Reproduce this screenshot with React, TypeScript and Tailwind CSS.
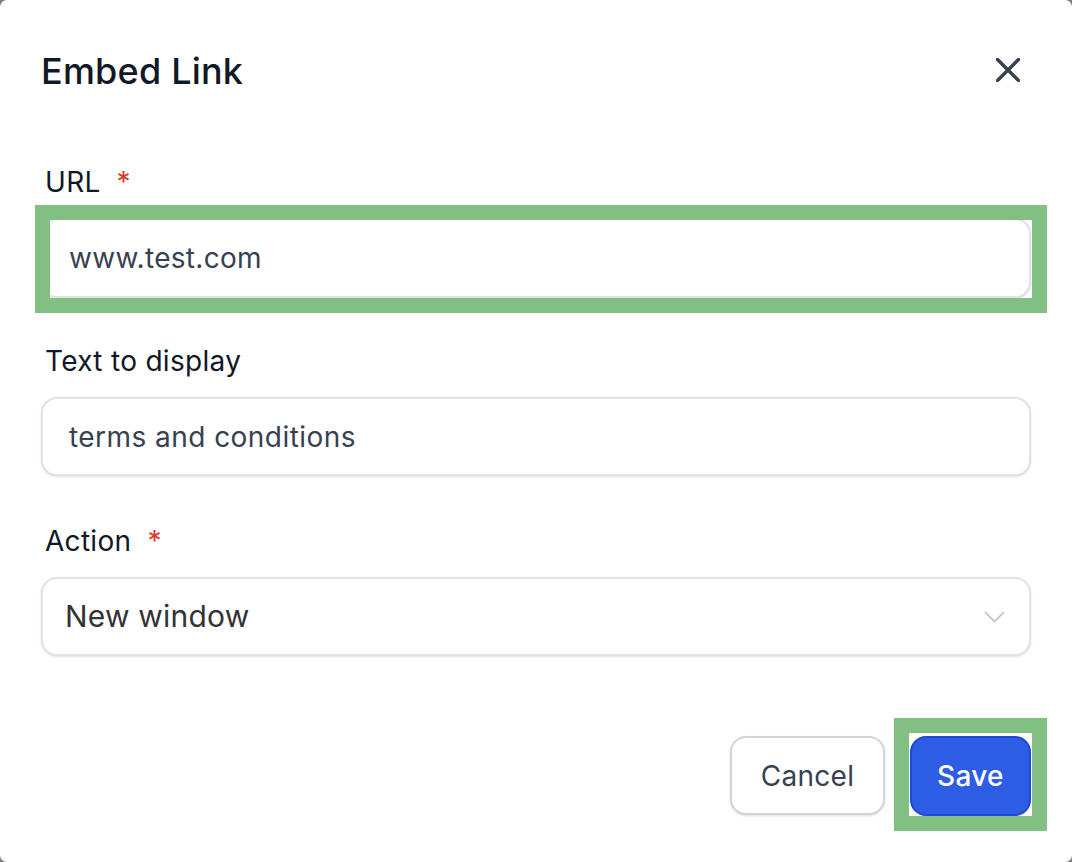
import React from "react";

const font = { fontFamily: "Inter, 'Noto Sans', sans-serif" };

function Label({ text, required }: { text: string; required?: boolean }) {
  return (
    <div className="flex items-start pl-[4px] text-[28px] leading-[40px] text-[#111827] tracking-[0.3px]">
      <span>{text}</span>
      {required && <span className="ml-[16px] text-[#d4402b]">*</span>}
    </div>
  );
}

export default function App() {
  return (
    <div className="w-[1072px] h-[862px] bg-[#7d7d7d]" style={font}>
      <div className="w-full h-full bg-white rounded-[7px] flex flex-col px-[41px]">
        <div className="flex items-center justify-between pt-[49px]">
          <h1 className="text-[36px] leading-[44px] font-medium text-[#111827] tracking-[0.2px]">Embed Link</h1>
          <svg className="mr-[11px] mt-[-3px]" width="24" height="24" viewBox="0 0 24 24" fill="none" stroke="#374151" strokeWidth="3.4" strokeLinecap="round">
            <path d="M1.5 1.5 L22.5 22.5 M22.5 1.5 L1.5 22.5" />
          </svg>
        </div>

        <div className="mt-[69px]">
          <Label text="URL" required />
          <div className="relative mt-[16px]">
            <div className="h-[80px] rounded-[16px] border-2 border-[#e2e2e7] bg-white shadow-sm flex items-center px-[26px] text-[28px] text-[#374151] tracking-[0.3px]">
              www.test.com
            </div>
            <div className="absolute left-[-6px] top-[-13px] right-[-16px] bottom-[-15px] border-[15px] border-[#82bf82] pointer-events-none" />
          </div>
        </div>

        <div className="mt-[43px]">
          <Label text="Text to display" />
          <div className="mt-[16px] h-[79px] rounded-[16px] border-2 border-[#e2e2e7] bg-white shadow-sm flex items-center px-[26px] text-[28px] text-[#374151] tracking-[0.45px]">
            terms and conditions
          </div>
        </div>

        <div className="mt-[45px]">
          <Label text="Action" required />
          <div className="mt-[16px] h-[79px] rounded-[16px] border-2 border-[#e2e2e7] bg-white shadow-sm flex items-center justify-between pl-[22px] pr-[24px] text-[30px] text-[#333333] tracking-[0.2px]">
            <span>New window</span>
            <svg width="21" height="12" viewBox="0 0 21 12" fill="none" stroke="#bdbdbd" strokeWidth="1.6">
              <path d="M1 1 L10.5 10.5 L20 1" />
            </svg>
          </div>
        </div>

        <div className="mt-[80px] flex justify-end gap-[25px]">
          <button className="h-[79px] w-[155px] rounded-[16px] border-2 border-[#d1d5db] bg-white shadow-sm text-[28px] text-[#374151] tracking-[0.3px]">
            Cancel
          </button>
          <div className="relative">
            <button className="h-[80px] w-[121px] rounded-[16px] border-2 border-[#2446d6] bg-[#2d5ce5] text-[28px] text-white font-medium tracking-[0.3px]">
              Save
            </button>
            <div className="absolute left-[-16px] top-[-18px] right-[-16px] bottom-[-15px] border-[15px] border-[#82bf82] pointer-events-none" />
          </div>
        </div>
      </div>
    </div>
  );
}
